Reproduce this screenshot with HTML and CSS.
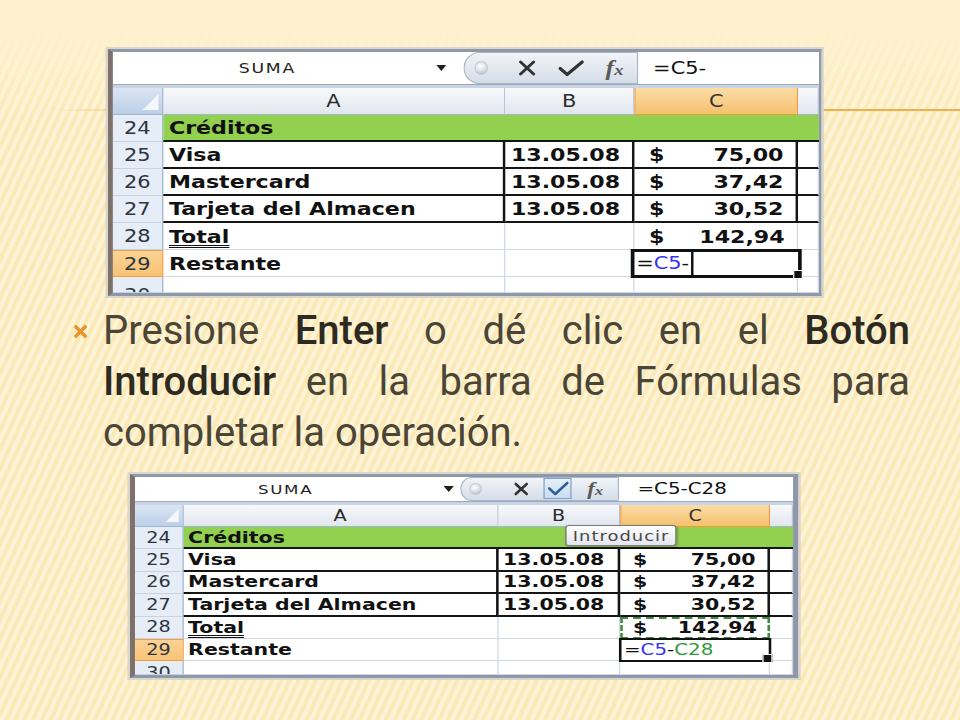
FILE: index.html
```html
<!DOCTYPE html>
<html lang="es">
<head>
<meta charset="utf-8">
<title>Excel - Botón Introducir</title>
<link rel="stylesheet" href="styles.css">
</head>
<body>
<div class="slide">

  <div class="sheet s1">
    <div class="fbar">
      <div class="namebox"><span class="nm">SUMA</span><span class="drop"><span class="tri"></span></span></div>
      <div class="gap"></div>
      <div class="pill">
        <span class="slot ballslot"><span class="ball"></span></span>
        <span class="slot xs"><svg class="ico" viewBox="0 0 19 16" preserveAspectRatio="none"><path d="M3 2 L16 14 M16 2 L3 14" stroke="#333" stroke-width="3" stroke-linecap="round"/></svg></span>
        <span class="slot oks"><svg class="ico" viewBox="0 0 26 17" preserveAspectRatio="none"><path d="M2 8.5 L9 14.5 L24 2" fill="none" stroke="#333" stroke-width="3.2" stroke-linecap="round" stroke-linejoin="round"/></svg></span>
        <span class="slot fxs"><span class="fx"><span class="f">f</span><span class="x">x</span></span></span>
      </div>
      <div class="formula">=C5-</div>
    </div>
    <div class="strip"></div>
    <div class="grid">
      <div class="corner"><span class="corner-tri"></span></div>
      <div class="ch">A</div><div class="ch">B</div><div class="ch csel">C</div><div class="ch"></div>

      <div class="rh">24</div><div class="cell green">Créditos</div>

      <div class="rh">25</div><div class="cell bb br">Visa</div><div class="cell bb br">13.05.08</div><div class="cell bb br money"><span>$</span><span>75,00</span></div><div class="cell bb"></div>
      <div class="rh">26</div><div class="cell bb br">Mastercard</div><div class="cell bb br">13.05.08</div><div class="cell bb br money"><span>$</span><span>37,42</span></div><div class="cell bb"></div>
      <div class="rh">27</div><div class="cell bb br">Tarjeta del Almacen</div><div class="cell bb br">13.05.08</div><div class="cell bb br money"><span>$</span><span>30,52</span></div><div class="cell bb"></div>

      <div class="rh">28</div><div class="cell"><span class="dbl">Total</span></div><div class="cell"></div><div class="cell money"><span>$</span><span>142,94</span></div><div class="cell"></div>
      <div class="rh rsel">29</div><div class="cell">Restante</div><div class="cell"></div>
      <div class="cell editing"><span class="etext">=<span class="ref1">C5</span>-</span><span class="ebox"></span></div><div class="cell"></div>

      <div class="rh last">30</div><div class="cell"></div><div class="cell"></div><div class="cell"></div><div class="cell"></div>
    </div>
  </div>

  <div class="bullet">
    <svg class="mark" width="15" height="15" viewBox="0 0 15 15"><path d="M3 3 L12 12 M12 3 L3 12" stroke="#e8952c" stroke-width="3.4" stroke-linecap="square"/></svg>
    <p class="txt">Presione <span class="em">Enter</span> o dé clic en el <span class="em">Botón</span> <span class="em">Introducir</span> en la barra de Fórmulas para completar la operación.</p>
  </div>

  <div class="sheet s2">
    <div class="fbar">
      <div class="namebox"><span class="nm">SUMA</span><span class="drop"><span class="tri"></span></span></div>
      <div class="pill">
        <span class="slot ballslot"><span class="ball"></span></span>
        <span class="slot xs"><svg class="ico" viewBox="0 0 17 14" preserveAspectRatio="none"><path d="M3 2 L14 12 M14 2 L3 12" stroke="#333" stroke-width="2.6" stroke-linecap="round"/></svg></span>
        <span class="slot oks hot"><svg class="ico" viewBox="0 0 22 15" preserveAspectRatio="none"><path d="M2 7.5 L8 13 L20 2" fill="none" stroke="#2f5f9e" stroke-width="2.6" stroke-linecap="round" stroke-linejoin="round"/></svg></span>
        <span class="slot fxs"><span class="fx"><span class="f">f</span><span class="x">x</span></span></span>
      </div>
      <div class="formula">=C5-C28</div>
    </div>
    <div class="strip"></div>
    <div class="grid">
      <div class="corner"><span class="corner-tri"></span></div>
      <div class="ch">A</div><div class="ch">B</div><div class="ch csel">C</div><div class="ch"></div>

      <div class="rh">24</div><div class="cell green">Créditos</div>

      <div class="rh">25</div><div class="cell bb br">Visa</div><div class="cell bb br">13.05.08</div><div class="cell bb br money"><span>$</span><span>75,00</span></div><div class="cell bb"></div>
      <div class="rh">26</div><div class="cell bb br">Mastercard</div><div class="cell bb br">13.05.08</div><div class="cell bb br money"><span>$</span><span>37,42</span></div><div class="cell bb"></div>
      <div class="rh">27</div><div class="cell bb br">Tarjeta del Almacen</div><div class="cell bb br">13.05.08</div><div class="cell bb br money"><span>$</span><span>30,52</span></div><div class="cell bb"></div>

      <div class="rh">28</div><div class="cell"><span class="dbl">Total</span></div><div class="cell"></div><div class="cell money ants"><span>$</span><span>142,94</span></div><div class="cell"></div>
      <div class="rh rsel">29</div><div class="cell">Restante</div><div class="cell"></div>
      <div class="cell editing2"><span class="etext">=<span class="ref1">C5</span>-<span class="ref2">C28</span></span></div><div class="cell"></div>

      <div class="rh last">30</div><div class="cell"></div><div class="cell"></div><div class="cell"></div><div class="cell"></div>
    </div>
    <div class="tip">Introducir</div>
  </div>

</div>
</body>
</html>
```
FILE: styles.css
```css
* { box-sizing: border-box; }
html, body { margin: 0; padding: 0; }
body {
  width: 960px;
  height: 720px;
  overflow: hidden;
  background-color: #fdf1cd;
  background-image:
    linear-gradient(to right, rgba(240,176,74,0) 55px, #efb04b 200px, #efb04b 100%),
    linear-gradient(to bottom, #fdf1cd 0, #fdf1cd 30px, rgba(253,241,205,0) 120px),
    repeating-linear-gradient(115deg, #fdf4d8 0 4px, #fbe9b8 4px 8px);
  background-size: 100% 2px, 100% 100%, 100% 100%;
  background-position: 0 109px, 0 0, 0 0;
  background-repeat: no-repeat;
}

.slide {
  width: 960px;
  height: 720px;
  padding-top: 49px;
  font-family: "DejaVu Sans", Verdana, sans-serif;
}

/* ---------- spreadsheet picture (stretched horizontally like the pasted screenshot) ---------- */
.sheet {
  position: relative;
  background: #fff;
  border-style: solid;
  border-color: #8e98a8;
  border-left-color: #7d7169;
  box-shadow: 0 0 0 2px #d9d6cc;
  transform: scaleX(var(--k));
  transform-origin: left top;
}
.s1 {
  --k: 1.23;
  margin-left: 108px;
  width: calc(713px / var(--k));
  border-width: 3px 2px 3px 4px;
}
.s2 {
  --k: 1.28;
  margin-left: 130px;
  margin-top: 16px;
  width: calc(668px / var(--k));
  border-width: 3px 4px 3px 4px;
}

/* ---------- formula bar ---------- */
.fbar {
  display: flex;
  background: #fff;
  border-bottom: 1px solid #9ea8b6;
}
.s1 .fbar { height: 33px; }
.s2 .fbar { height: 25px; }

.namebox { display: flex; align-items: center; }
.s1 .namebox { width: calc(341px / var(--k)); }
.s2 .namebox { width: calc(325px / var(--k)); }
.nm {
  flex: 1;
  text-align: center;
  color: #222;
}
.s1 .nm { font-size: 14px; letter-spacing: 1.5px; padding-right: calc(6px / var(--k)); }
.s2 .nm { font-size: 13px; letter-spacing: 1.3px; }
.drop { width: calc(26px / var(--k)); display: flex; justify-content: center; }
.s2 .drop { width: calc(24px / var(--k)); }
.tri {
  width: 0; height: 0;
  border-left: 4px solid transparent;
  border-right: 4px solid transparent;
  border-top: 6px solid #1e1e1e;
}
.gap { width: calc(10px / var(--k)); }

.pill {
  display: flex;
  align-items: stretch;
  background: linear-gradient(#f1f4f8, #d5dde8);
  border: 1px solid #a7b6c9;
  border-right: 0;
}
.s1 .pill { width: calc(173px / var(--k)); border-radius: 14px 0 0 14px / 17px 0 0 17px; }
.s2 .pill { width: calc(158px / var(--k)); border-radius: 10px 0 0 10px / 13px 0 0 13px; }
.slot { display: flex; align-items: center; justify-content: center; }
.s1 .ballslot { width: calc(40px / var(--k)); justify-content: flex-start; padding-left: calc(9px / var(--k)); }
.s1 .xs { width: calc(45px / var(--k)); }
.s1 .oks { width: calc(42px / var(--k)); }
.s1 .fxs { width: calc(45px / var(--k)); }
.s2 .ballslot { width: calc(39px / var(--k)); justify-content: flex-start; padding-left: calc(8px / var(--k)); }
.s2 .xs { width: calc(43px / var(--k)); }
.s2 .oks { width: calc(29px / var(--k)); }
.s2 .fxs { width: calc(46px / var(--k)); }

.ico { display: block; }
.s1 .xs .ico { width: calc(19px / var(--k)); height: 16px; }
.s1 .oks .ico { width: calc(26px / var(--k)); height: 17px; }
.s2 .xs .ico { width: calc(17px / var(--k)); height: 14px; }
.s2 .oks .ico { width: calc(22px / var(--k)); height: 15px; }

.hot {
  background: linear-gradient(#e6eff9, #c9dcf1);
  border: 1px solid #7fa2cd;
  margin: 0 0 1px;
}
.ball {
  width: calc(14px / var(--k));
  height: 14px;
  border-radius: 50%;
  background: radial-gradient(circle at 40% 35%, #ffffff 0, #e3e7ec 40%, #aab3bf 100%);
  border: 1px solid #c2cad4;
}
.s2 .ball { width: calc(12px / var(--k)); height: 12px; }
.fx {
  font-family: "Liberation Serif", "DejaVu Serif", serif;
  font-style: italic;
  font-weight: bold;
  color: #5a5a5a;
  line-height: 1;
}
.s1 .fx .f { font-size: 21px; }
.s1 .fx .x { font-size: 15px; }
.s2 .fx .f { font-size: 18px; }
.s2 .fx .x { font-size: 13px; }

.formula {
  flex: 1;
  display: flex;
  align-items: center;
  border-left: 1px solid #a7b6c9;
  color: #111;
}
.s1 .formula { font-size: 17px; padding-left: calc(15px / var(--k)); }
.s2 .formula { font-size: 15.5px; padding-left: calc(18px / var(--k)); }

.strip {
  height: 3px;
  background: #c9d5e4;
}

/* ---------- grid ---------- */
.grid {
  display: grid;
  background: #fff;
  overflow: hidden;
}
.s1 .grid {
  grid-template-columns: calc(50px / var(--k)) calc(342px / var(--k)) calc(130px / var(--k)) calc(163px / var(--k)) 1fr;
  grid-template-rows: repeat(7, 27px) 16px;
}
.s2 .grid {
  grid-template-columns: calc(48px / var(--k)) calc(315px / var(--k)) calc(122px / var(--k)) calc(150px / var(--k)) 1fr;
  grid-template-rows: 22px repeat(6, 22.4px) 14px;
}

.corner {
  position: relative;
  background: linear-gradient(#dae5f3, #bccfe7);
  border-right: 1px solid #9eb6ce;
  border-bottom: 1px solid #9eb6ce;
}
.corner-tri {
  position: absolute;
  right: 3px;
  bottom: 4px;
  width: 0; height: 0;
  border-left: 13px solid transparent;
  border-bottom: 16px solid #f4f7fb;
}
.s2 .corner-tri { border-left-width: 10px; border-bottom-width: 13px; }

.ch {
  display: flex;
  align-items: center;
  justify-content: center;
  background: linear-gradient(#f8f9fb, #e1e6ee);
  border-right: 1px solid #b5c3d4;
  border-bottom: 1px solid #9eb6ce;
  color: #2b2b2b;
}
.s1 .ch { font-size: 17px; }
.s2 .ch { font-size: 15px; }
.ch.csel {
  background: linear-gradient(#fbdca6, #f5c16e);
  border: 1px solid #f29a3a;
  border-top: 0;
  color: #333;
}

.rh {
  display: flex;
  align-items: center;
  justify-content: center;
  background: #e6edf6;
  border-right: 1px solid #9eb6ce;
  border-bottom: 1px solid #c5d3e3;
  color: #2c3440;
  overflow: hidden;
}
.s1 .rh { font-size: 17px; }
.s2 .rh { font-size: 15px; }
.rh.rsel {
  background: linear-gradient(#fbd395, #f7c275);
  border: 1px solid #f2a044;
  border-left: 0;
}
.s1 .rh.last { align-items: flex-start; padding-top: 8px; }
.s2 .rh.last { align-items: flex-start; padding-top: 3px; }

.cell {
  display: flex;
  align-items: center;
  border-right: 1px solid #d0d7e5;
  border-bottom: 1px solid #d0d7e5;
  color: #111;
  font-weight: bold;
  white-space: nowrap;
}
.s1 .cell { font-size: 18px; padding-left: calc(6px / var(--k)); }
.s2 .cell { font-size: 16px; padding-left: calc(5px / var(--k)); }

.cell.green {
  grid-column: span 4;
  background: #92d050;
  border-right: 0;
  border-bottom: 2px solid #151515;
}
.cell.bb { border-bottom: 2px solid #151515; }
.cell.br { border-right: 2px solid #151515; }
.cell.money { justify-content: space-between; }
.s1 .cell.money { padding: 0 calc(12px / var(--k)) 0 calc(14px / var(--k)); }
.s2 .cell.money { padding: 0 calc(12px / var(--k)) 0 calc(13px / var(--k)); }

.dbl {
  text-decoration: underline double;
  text-decoration-thickness: 1px;
  text-underline-offset: 2px;
}

/* editing cell, sheet 1 */
.cell.editing {
  position: relative;
  font-weight: normal;
  padding-left: 3px;
  outline: 3px solid #111;
  outline-offset: -2px;
  margin: 0 -2px 0 -2px;
  z-index: 1;
}
.s1 .cell.editing { font-size: 17px; }
.ebox {
  align-self: stretch;
  margin-left: 2px;
  border-left: 2px solid #111;
  flex: 1;
}
.cell.editing::after,
.cell.editing2::after {
  content: "";
  position: absolute;
  right: -3px;
  bottom: -3px;
  width: 6px;
  height: 7px;
  background: #111;
  border: 1px solid #fff;
}
.ref1 { color: #3434f2; }
.ref2 { color: #2e9a3c; }

/* editing cell, sheet 2 */
.cell.editing2 {
  position: relative;
  font-weight: normal;
  padding-left: 3px;
  outline: 2px solid #111;
  outline-offset: -1px;
  z-index: 1;
}
.s2 .cell.editing2 { font-size: 15.5px; }

.cell.ants {
  outline: 2px dashed #3f8a43;
  outline-offset: -2px;
}

/* tooltip */
.tip {
  position: absolute;
  left: calc(430px / var(--k));
  top: 48px;
  width: calc(112px / var(--k));
  height: 21px;
  display: flex;
  align-items: center;
  justify-content: center;
  font-size: 14px;
  letter-spacing: 0.8px;
  color: #4a4a4a;
  background: linear-gradient(#ffffff, #e4e5ee);
  border: 1px solid #7a7a7a;
  border-radius: 3px;
  box-shadow: 1px 1px 2px rgba(0,0,0,0.25);
  z-index: 3;
}

/* ---------- bullet text ---------- */
.bullet {
  display: flex;
  align-items: flex-start;
  margin: 9px 0 0 73px;
}
.mark {
  flex: none;
  margin-top: 19px;
  margin-right: 15px;
}
.txt {
  margin: 0;
  width: 807px;
  font-family: Roboto, "Liberation Sans", sans-serif;
  font-size: 40px;
  line-height: 51px;
  text-align: justify;
  color: #4b4536;
}
.em {
  font-weight: 500;
  color: #2d2a21;
}
```
